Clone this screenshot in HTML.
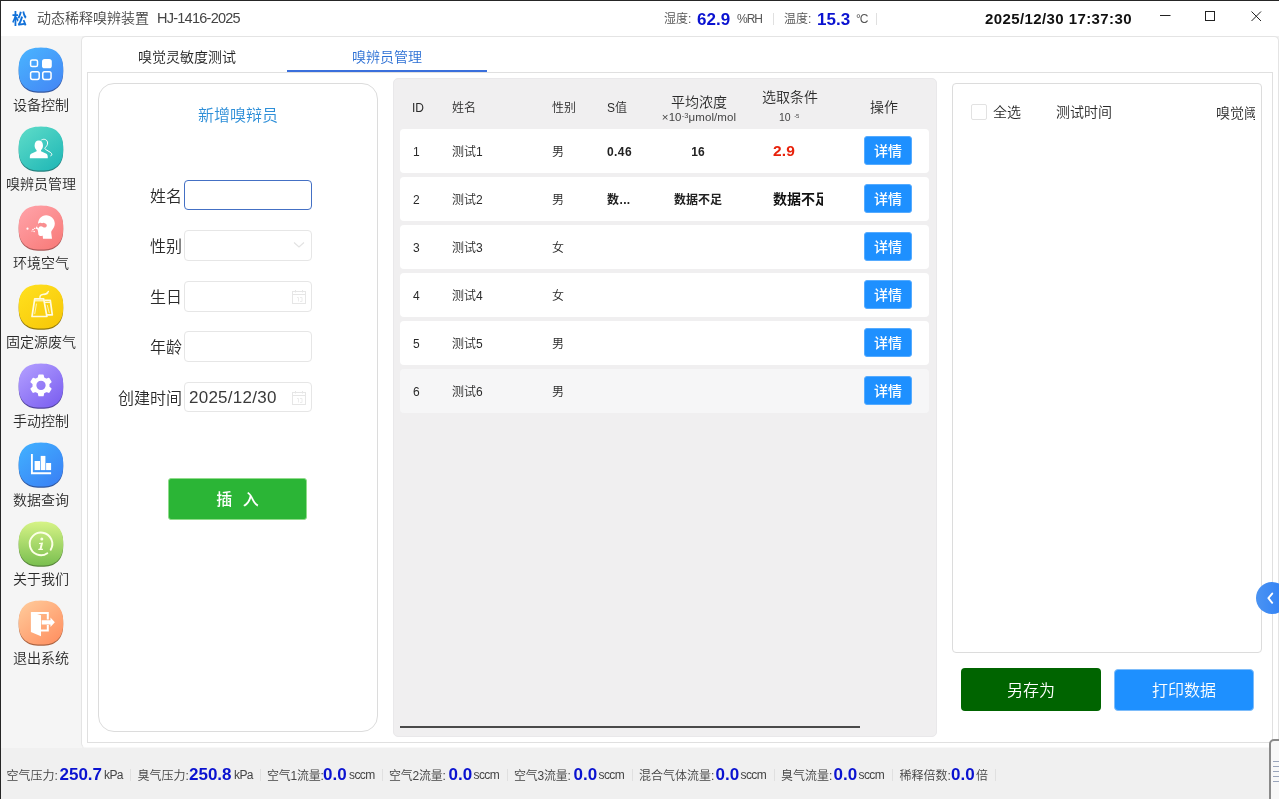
<!DOCTYPE html>
<html lang="zh-CN">
<head>
<meta charset="utf-8">
<title>动态稀释嗅辨装置 HJ-1416-2025</title>
<style>
*{box-sizing:border-box;margin:0;padding:0}
html,body{width:1279px;height:799px;overflow:hidden;background:#fff}
body{font-family:"Liberation Sans","Noto Sans CJK SC",sans-serif;color:#2a2a2a;font-size:14px;font-weight:350;position:relative}
#win{position:absolute;left:0;top:0;width:1279px;height:799px;background:#f0f0f0;overflow:hidden;will-change:transform}
#frameL{position:absolute;left:0;top:0;width:1px;height:799px;background:#262626;z-index:50}
#frameT{position:absolute;left:0;top:0;width:1279px;height:1px;background:#262626;z-index:50}
#titlebar{position:absolute;left:0;top:0;width:1279px;height:36px;background:#fff}
#sidebar{position:absolute;left:0;top:36px;width:82px;height:712px;background:#f5f5f5}
#content{position:absolute;left:81px;top:36px;width:1198px;height:712px;background:#fff;border:1px solid #e4e4e4;border-bottom-color:#f8f8f8;border-radius:5px 5px 0 5px}
#tabpanel{position:absolute;left:87px;top:72px;width:1186px;height:671px;border:1px solid #e0e0e0;background:#fff}
#statusbar{position:absolute;left:0;top:748px;width:1279px;height:51px;background:#f0f0f0}
.t{position:absolute;white-space:nowrap;line-height:20px;height:20px}
.c{text-align:center}
.b{font-weight:bold}
.nav{position:absolute;left:0;width:82px;height:79px}
.nav svg{position:absolute;left:18px;top:0;width:46px;height:46px}
.nav .t{left:0;width:82px;text-align:center;font-size:14px;color:#2a2a2a;top:48px}
.tab{font-size:14px;color:#222;top:47px;text-align:center;width:200px}
.tab.on{color:#2b6fd4}
#tabline{position:absolute;left:287px;top:70px;width:200px;height:2px;background:#3a6fdc}
#card{position:absolute;left:98px;top:83px;width:280px;height:649px;border:1px solid #dcdcdc;border-radius:16px;background:#fff}
.lbl{font-size:16px;color:#2a2a2a;width:100px;text-align:right;left:82px;line-height:30px;height:30px}
.inp{position:absolute;left:184px;width:128px;height:30px;border:1px solid #e6e6e6;border-radius:4px;background:#fff}
.inp.focus{border-color:#4470c4}
#btnIns{position:absolute;left:168px;top:478px;width:139px;height:42px;background:#2bb536;border:1px solid #8fdc8a;border-radius:3px;color:#fff;font-size:16px;text-align:center;line-height:41px;word-spacing:6px;font-weight:500}
#tbl{position:absolute;left:393px;top:78px;width:544px;height:659px;background:#f0eff0;border:1px solid #e9e8ea;border-radius:5px}
.row{position:absolute;left:400px;width:529px;height:44px;background:#fff;border-radius:4px}
.row.hov{background:#f6f6f7}
.cell{font-size:12px;color:#2a2a2a}
.det{position:absolute;left:864px;width:48px;height:29px;background:#1e90ff;border-radius:3px;color:#fff;font-size:14px;font-weight:500;text-align:center;line-height:28px;border:1px solid #55abff}
#hscroll{position:absolute;left:400px;top:726px;width:460px;height:2px;background:#4a4a4a}
#rpanel{position:absolute;left:952px;top:83px;width:310px;height:570px;border:1px solid #dcdcdc;border-radius:4px;background:#fff}
#chk{position:absolute;left:971px;top:104px;width:16px;height:16px;border:1px solid #e2e2e2;border-radius:2px;background:#fff}
#btnSave{position:absolute;left:961px;top:668px;width:140px;height:43px;background:#006400;border-radius:4px;color:#fff;font-size:16px;text-align:center;line-height:45px}
#btnPrint{position:absolute;left:1114px;top:669px;width:140px;height:42px;background:#1e90ff;border:1px solid #7dbcfa;border-radius:4px;color:#fff;font-size:16px;text-align:center;line-height:42px}
#fab{position:absolute;left:1256px;top:582px;width:32px;height:32px;border-radius:16px;background:linear-gradient(90deg,#4b93f2,#2d7ff6)}
#grip{position:absolute;left:1269px;top:739px;width:20px;height:70px;border:2px solid #8a8a8a;border-radius:5px;background:#f8f8f8}
.sl{font-size:12px;color:#444}
.sv{font-size:17px;font-weight:bold;color:#0a12d0}
.su{font-size:12px;letter-spacing:-0.6px;color:#444}
.sep{position:absolute;width:1px;height:12px;background:#e0e0e0}
</style>
</head>
<body>
<div id="win">

<div id="titlebar">
<span class="t b" style="left:12px;top:9px;font-size:15px;color:#1070d8">松</span>
<span class="t" style="left:37px;top:8px;font-size:14px;color:#444">动态稀释嗅辨装置<span style="font-size:14.5px;letter-spacing:-0.75px;margin-left:8px">HJ-1416-2025</span></span>
<span class="t sl" style="left:664px;top:9px;color:#555">湿度:</span>
<span class="t sv" style="left:697px;top:10px">62.9</span>
<span class="t su" style="left:737px;top:8.5px;color:#555;letter-spacing:-1px">%RH</span>
<span class="sep" style="left:773px;top:13px"></span>
<span class="t sl" style="left:784px;top:9px;color:#555">温度:</span>
<span class="t sv" style="left:817px;top:10px">15.3</span>
<span class="t su" style="left:856px;top:8.5px;color:#555;letter-spacing:-1px">°C</span>
<span class="sep" style="left:876px;top:13px"></span>
<span class="t b" style="left:985px;top:9px;font-size:15px;letter-spacing:0.4px;color:#111">2025/12/30 17:37:30</span>
<svg style="position:absolute;left:1150px;top:0" width="129" height="36" viewBox="0 0 129 36"><path d="M10 15.500h10.500" stroke="#222" stroke-width="1" fill="none"/><rect x="55.500" y="11.500" width="9" height="9" fill="none" stroke="#222" stroke-width="1"/><path d="M101.500 11.500l9.500 9.500M111 11.500l-9.500 9.500" stroke="#222" stroke-width="1" fill="none"/></svg>
</div>
<div id="sidebar"></div>
<div class="nav" style="top:47px"><svg viewBox="-0.7 -0.6 46 46"><defs><linearGradient id="g0" x1="0.1" y1="0" x2="0.9" y2="1"><stop offset="0" stop-color="#49b3ff"/><stop offset="1" stop-color="#4487f5"/></linearGradient></defs><path d="M44.50,22.00 L44.43,25.12 L44.23,27.42 L43.89,29.46 L43.42,31.33 L42.82,33.05 L42.08,34.64 L41.22,36.10 L40.23,37.45 L39.11,38.67 L37.87,39.78 L36.51,40.75 L35.03,41.61 L33.42,42.33 L31.68,42.93 L29.80,43.40 L27.73,43.73 L25.41,43.93 L22.25,44.00 L19.09,43.93 L16.77,43.73 L14.70,43.40 L12.82,42.93 L11.08,42.33 L9.47,41.61 L7.99,40.75 L6.63,39.78 L5.39,38.67 L4.27,37.45 L3.28,36.10 L2.42,34.64 L1.68,33.05 L1.08,31.33 L0.61,29.46 L0.27,27.42 L0.07,25.12 L0.00,22.00 L0.07,18.88 L0.27,16.58 L0.61,14.54 L1.08,12.67 L1.68,10.95 L2.42,9.36 L3.28,7.90 L4.27,6.55 L5.39,5.33 L6.63,4.22 L7.99,3.25 L9.47,2.39 L11.08,1.67 L12.82,1.07 L14.70,0.60 L16.77,0.27 L19.09,0.07 L22.25,0.00 L25.41,0.07 L27.73,0.27 L29.80,0.60 L31.68,1.07 L33.42,1.67 L35.03,2.39 L36.51,3.25 L37.87,4.22 L39.11,5.33 L40.23,6.55 L41.22,7.90 L42.08,9.36 L42.82,10.95 L43.42,12.67 L43.89,14.54 L44.23,16.58 L44.43,18.88Z" fill="#2a4f9a" transform="translate(0,1.2)" opacity="0.95"/><path d="M44.50,22.00 L44.43,25.12 L44.23,27.42 L43.89,29.46 L43.42,31.33 L42.82,33.05 L42.08,34.64 L41.22,36.10 L40.23,37.45 L39.11,38.67 L37.87,39.78 L36.51,40.75 L35.03,41.61 L33.42,42.33 L31.68,42.93 L29.80,43.40 L27.73,43.73 L25.41,43.93 L22.25,44.00 L19.09,43.93 L16.77,43.73 L14.70,43.40 L12.82,42.93 L11.08,42.33 L9.47,41.61 L7.99,40.75 L6.63,39.78 L5.39,38.67 L4.27,37.45 L3.28,36.10 L2.42,34.64 L1.68,33.05 L1.08,31.33 L0.61,29.46 L0.27,27.42 L0.07,25.12 L0.00,22.00 L0.07,18.88 L0.27,16.58 L0.61,14.54 L1.08,12.67 L1.68,10.95 L2.42,9.36 L3.28,7.90 L4.27,6.55 L5.39,5.33 L6.63,4.22 L7.99,3.25 L9.47,2.39 L11.08,1.67 L12.82,1.07 L14.70,0.60 L16.77,0.27 L19.09,0.07 L22.25,0.00 L25.41,0.07 L27.73,0.27 L29.80,0.60 L31.68,1.07 L33.42,1.67 L35.03,2.39 L36.51,3.25 L37.87,4.22 L39.11,5.33 L40.23,6.55 L41.22,7.90 L42.08,9.36 L42.82,10.95 L43.42,12.67 L43.89,14.54 L44.23,16.58 L44.43,18.88Z" fill="url(#g0)"/><rect x="11.9" y="12.4" width="6.9" height="6.6" rx="1.6" fill="none" stroke="#fff" stroke-width="1.5"/>
<rect x="23.3" y="11.3" width="9.8" height="9.4" rx="2.6" fill="#fff"/>
<rect x="11.9" y="24.2" width="8.6" height="7.6" rx="1.8" fill="none" stroke="#fff" stroke-width="1.5"/>
<rect x="24.05" y="24.2" width="8.3" height="7.6" rx="1.8" fill="none" stroke="#fff" stroke-width="1.5"/></svg><span class="t">设备控制</span></div>
<div class="nav" style="top:126px"><svg viewBox="-0.7 -0.6 46 46"><defs><linearGradient id="g1" x1="0.1" y1="0" x2="0.9" y2="1"><stop offset="0" stop-color="#5cdbc8"/><stop offset="1" stop-color="#20b7b6"/></linearGradient></defs><path d="M44.50,22.00 L44.43,25.12 L44.23,27.42 L43.89,29.46 L43.42,31.33 L42.82,33.05 L42.08,34.64 L41.22,36.10 L40.23,37.45 L39.11,38.67 L37.87,39.78 L36.51,40.75 L35.03,41.61 L33.42,42.33 L31.68,42.93 L29.80,43.40 L27.73,43.73 L25.41,43.93 L22.25,44.00 L19.09,43.93 L16.77,43.73 L14.70,43.40 L12.82,42.93 L11.08,42.33 L9.47,41.61 L7.99,40.75 L6.63,39.78 L5.39,38.67 L4.27,37.45 L3.28,36.10 L2.42,34.64 L1.68,33.05 L1.08,31.33 L0.61,29.46 L0.27,27.42 L0.07,25.12 L0.00,22.00 L0.07,18.88 L0.27,16.58 L0.61,14.54 L1.08,12.67 L1.68,10.95 L2.42,9.36 L3.28,7.90 L4.27,6.55 L5.39,5.33 L6.63,4.22 L7.99,3.25 L9.47,2.39 L11.08,1.67 L12.82,1.07 L14.70,0.60 L16.77,0.27 L19.09,0.07 L22.25,0.00 L25.41,0.07 L27.73,0.27 L29.80,0.60 L31.68,1.07 L33.42,1.67 L35.03,2.39 L36.51,3.25 L37.87,4.22 L39.11,5.33 L40.23,6.55 L41.22,7.90 L42.08,9.36 L42.82,10.95 L43.42,12.67 L43.89,14.54 L44.23,16.58 L44.43,18.88Z" fill="#1a7a78" transform="translate(0,1.2)" opacity="0.95"/><path d="M44.50,22.00 L44.43,25.12 L44.23,27.42 L43.89,29.46 L43.42,31.33 L42.82,33.05 L42.08,34.64 L41.22,36.10 L40.23,37.45 L39.11,38.67 L37.87,39.78 L36.51,40.75 L35.03,41.61 L33.42,42.33 L31.68,42.93 L29.80,43.40 L27.73,43.73 L25.41,43.93 L22.25,44.00 L19.09,43.93 L16.77,43.73 L14.70,43.40 L12.82,42.93 L11.08,42.33 L9.47,41.61 L7.99,40.75 L6.63,39.78 L5.39,38.67 L4.27,37.45 L3.28,36.10 L2.42,34.64 L1.68,33.05 L1.08,31.33 L0.61,29.46 L0.27,27.42 L0.07,25.12 L0.00,22.00 L0.07,18.88 L0.27,16.58 L0.61,14.54 L1.08,12.67 L1.68,10.95 L2.42,9.36 L3.28,7.90 L4.27,6.55 L5.39,5.33 L6.63,4.22 L7.99,3.25 L9.47,2.39 L11.08,1.67 L12.82,1.07 L14.70,0.60 L16.77,0.27 L19.09,0.07 L22.25,0.00 L25.41,0.07 L27.73,0.27 L29.80,0.60 L31.68,1.07 L33.42,1.67 L35.03,2.39 L36.51,3.25 L37.87,4.22 L39.11,5.33 L40.23,6.55 L41.22,7.90 L42.08,9.36 L42.82,10.95 L43.42,12.67 L43.89,14.54 L44.23,16.58 L44.43,18.88Z" fill="url(#g1)"/><path d="M20.25 14c2.45 0 4.05 1.9 4.05 5 0 1.9-0.85 3.7-2 4.600v1.100l4.900 2.300c1.400 0.650 1.850 1.800 1.850 3.200v1.350H11.150v-1.350c0-1.400 0.450-2.550 1.850-3.200l4.900-2.300v-1.100c-1.150-0.900-2-2.700-2-4.600 0-3.100 1.600-5 4.050-5z" fill="#fff"/>
<path d="M23 13.200c2.700-1.600 5.900 0.200 5.900 3.200 0 1.700-0.800 3-1.900 4.100-0.900 0.900-1.100 1.700-0.200 2.300l4.500 2.700c1.200 0.700 1.900 1.600 1.800 2.600-0.050 0.600-0.400 0.900-1 1.100" fill="none" stroke="#fff" stroke-width="1" stroke-linecap="round"/></svg><span class="t">嗅辨员管理</span></div>
<div class="nav" style="top:205px"><svg viewBox="-0.7 -0.6 46 46"><defs><linearGradient id="g2" x1="0.1" y1="0" x2="0.9" y2="1"><stop offset="0" stop-color="#ffa2a8"/><stop offset="1" stop-color="#f87a78"/></linearGradient></defs><path d="M44.50,22.00 L44.43,25.12 L44.23,27.42 L43.89,29.46 L43.42,31.33 L42.82,33.05 L42.08,34.64 L41.22,36.10 L40.23,37.45 L39.11,38.67 L37.87,39.78 L36.51,40.75 L35.03,41.61 L33.42,42.33 L31.68,42.93 L29.80,43.40 L27.73,43.73 L25.41,43.93 L22.25,44.00 L19.09,43.93 L16.77,43.73 L14.70,43.40 L12.82,42.93 L11.08,42.33 L9.47,41.61 L7.99,40.75 L6.63,39.78 L5.39,38.67 L4.27,37.45 L3.28,36.10 L2.42,34.64 L1.68,33.05 L1.08,31.33 L0.61,29.46 L0.27,27.42 L0.07,25.12 L0.00,22.00 L0.07,18.88 L0.27,16.58 L0.61,14.54 L1.08,12.67 L1.68,10.95 L2.42,9.36 L3.28,7.90 L4.27,6.55 L5.39,5.33 L6.63,4.22 L7.99,3.25 L9.47,2.39 L11.08,1.67 L12.82,1.07 L14.70,0.60 L16.77,0.27 L19.09,0.07 L22.25,0.00 L25.41,0.07 L27.73,0.27 L29.80,0.60 L31.68,1.07 L33.42,1.67 L35.03,2.39 L36.51,3.25 L37.87,4.22 L39.11,5.33 L40.23,6.55 L41.22,7.90 L42.08,9.36 L42.82,10.95 L43.42,12.67 L43.89,14.54 L44.23,16.58 L44.43,18.88Z" fill="#a85050" transform="translate(0,1.2)" opacity="0.95"/><path d="M44.50,22.00 L44.43,25.12 L44.23,27.42 L43.89,29.46 L43.42,31.33 L42.82,33.05 L42.08,34.64 L41.22,36.10 L40.23,37.45 L39.11,38.67 L37.87,39.78 L36.51,40.75 L35.03,41.61 L33.42,42.33 L31.68,42.93 L29.80,43.40 L27.73,43.73 L25.41,43.93 L22.25,44.00 L19.09,43.93 L16.77,43.73 L14.70,43.40 L12.82,42.93 L11.08,42.33 L9.47,41.61 L7.99,40.75 L6.63,39.78 L5.39,38.67 L4.27,37.45 L3.28,36.10 L2.42,34.64 L1.68,33.05 L1.08,31.33 L0.61,29.46 L0.27,27.42 L0.07,25.12 L0.00,22.00 L0.07,18.88 L0.27,16.58 L0.61,14.54 L1.08,12.67 L1.68,10.95 L2.42,9.36 L3.28,7.90 L4.27,6.55 L5.39,5.33 L6.63,4.22 L7.99,3.25 L9.47,2.39 L11.08,1.67 L12.82,1.07 L14.70,0.60 L16.77,0.27 L19.09,0.07 L22.25,0.00 L25.41,0.07 L27.73,0.27 L29.80,0.60 L31.68,1.07 L33.42,1.67 L35.03,2.39 L36.51,3.25 L37.87,4.22 L39.11,5.33 L40.23,6.55 L41.22,7.90 L42.08,9.36 L42.82,10.95 L43.42,12.67 L43.89,14.54 L44.23,16.58 L44.43,18.88Z" fill="url(#g2)"/><g transform="translate(-0.5,-0.2)">
<path d="M28 9.800c4.800 0 8.600 3.600 8.600 8.400 0 3-1.300 5-2.800 6.600-0.700 0.800-0.900 1.800-0.700 3l0.700 5.600H24.800l-0.300-3c-2 0.300-3.800-0.100-4.300-1.400-0.300-0.800 0.100-1.600-0.300-2.200-0.200-0.400-0.300-0.900 0-1.300-0.500-0.300-0.700-0.800-0.500-1.300l-1.500-0.900c-0.600-0.400-0.500-1 0-1.500l1.900-2.300c-0.300-5.400 3.200-9.700 8.200-9.700z" fill="#fff"/>
<path d="M18.800 21.600c0.400-3.200 2.200-4.600 4.200-4 1.200 0.400 1.800-0.300 3-0.100 1.700 0.300 2.800 1.600 2.600 2.900-0.200 1.300-1.500 2-2.900 1.700-1-0.200-1.600-1.100-2.800-1.200-1.200-0.100-2.300 0.600-2.700 2.100z" fill="#f98e90"/>
</g>
<circle cx="8.800" cy="23.100" r="1.100" fill="#fff"/>
<circle cx="14.300" cy="24" r="0.800" fill="#fff"/>
<circle cx="16" cy="22.800" r="0.700" fill="#fff"/>
<circle cx="15.400" cy="26" r="0.750" fill="#fff"/>
<circle cx="13.300" cy="25.500" r="0.550" fill="#fff"/></svg><span class="t">环境空气</span></div>
<div class="nav" style="top:284px"><svg viewBox="-0.7 -0.6 46 46"><defs><linearGradient id="g3" x1="0.1" y1="0" x2="0.9" y2="1"><stop offset="0" stop-color="#ffe01e"/><stop offset="1" stop-color="#f7c708"/></linearGradient></defs><path d="M44.50,22.00 L44.43,25.12 L44.23,27.42 L43.89,29.46 L43.42,31.33 L42.82,33.05 L42.08,34.64 L41.22,36.10 L40.23,37.45 L39.11,38.67 L37.87,39.78 L36.51,40.75 L35.03,41.61 L33.42,42.33 L31.68,42.93 L29.80,43.40 L27.73,43.73 L25.41,43.93 L22.25,44.00 L19.09,43.93 L16.77,43.73 L14.70,43.40 L12.82,42.93 L11.08,42.33 L9.47,41.61 L7.99,40.75 L6.63,39.78 L5.39,38.67 L4.27,37.45 L3.28,36.10 L2.42,34.64 L1.68,33.05 L1.08,31.33 L0.61,29.46 L0.27,27.42 L0.07,25.12 L0.00,22.00 L0.07,18.88 L0.27,16.58 L0.61,14.54 L1.08,12.67 L1.68,10.95 L2.42,9.36 L3.28,7.90 L4.27,6.55 L5.39,5.33 L6.63,4.22 L7.99,3.25 L9.47,2.39 L11.08,1.67 L12.82,1.07 L14.70,0.60 L16.77,0.27 L19.09,0.07 L22.25,0.00 L25.41,0.07 L27.73,0.27 L29.80,0.60 L31.68,1.07 L33.42,1.67 L35.03,2.39 L36.51,3.25 L37.87,4.22 L39.11,5.33 L40.23,6.55 L41.22,7.90 L42.08,9.36 L42.82,10.95 L43.42,12.67 L43.89,14.54 L44.23,16.58 L44.43,18.88Z" fill="#8a7000" transform="translate(0,1.2)" opacity="0.95"/><path d="M44.50,22.00 L44.43,25.12 L44.23,27.42 L43.89,29.46 L43.42,31.33 L42.82,33.05 L42.08,34.64 L41.22,36.10 L40.23,37.45 L39.11,38.67 L37.87,39.78 L36.51,40.75 L35.03,41.61 L33.42,42.33 L31.68,42.93 L29.80,43.40 L27.73,43.73 L25.41,43.93 L22.25,44.00 L19.09,43.93 L16.77,43.73 L14.70,43.40 L12.82,42.93 L11.08,42.33 L9.47,41.61 L7.99,40.75 L6.63,39.78 L5.39,38.67 L4.27,37.45 L3.28,36.10 L2.42,34.64 L1.68,33.05 L1.08,31.33 L0.61,29.46 L0.27,27.42 L0.07,25.12 L0.00,22.00 L0.07,18.88 L0.27,16.58 L0.61,14.54 L1.08,12.67 L1.68,10.95 L2.42,9.36 L3.28,7.90 L4.27,6.55 L5.39,5.33 L6.63,4.22 L7.99,3.25 L9.47,2.39 L11.08,1.67 L12.82,1.07 L14.70,0.60 L16.77,0.27 L19.09,0.07 L22.25,0.00 L25.41,0.07 L27.73,0.27 L29.80,0.60 L31.68,1.07 L33.42,1.67 L35.03,2.39 L36.51,3.25 L37.87,4.22 L39.11,5.33 L40.23,6.55 L41.22,7.90 L42.08,9.36 L42.82,10.95 L43.42,12.67 L43.89,14.54 L44.23,16.58 L44.43,18.88Z" fill="url(#g3)"/><path d="M16 14.300h9l3.200 17.600H13.300z" fill="none" stroke="#fffbe0" stroke-width="1.700" stroke-linejoin="round"/>
<path d="M15.800 16.200h9.400" stroke="#fffbe0" stroke-width="1.100"/>
<path d="M25.800 15.800h5.800l2 14.400h-5.600" fill="none" stroke="#fffbe0" stroke-width="1.700" stroke-linejoin="round"/>
<path d="M26.200 17.800h5.600" stroke="#fffbe0" stroke-width="1.100"/>
<path d="M17.800 19l-1.800 10.500M28.600 20.500l2 8" stroke="#fffbe0" stroke-width="0.900" opacity="0.850"/>
<path d="M21.300 13.600c-0.400-2.400 0.800-3.500 2.800-3.700 2.400-0.200 4.600-1 5.600-3" fill="none" stroke="#fffbe0" stroke-width="1.400" stroke-linecap="round"/>
<path d="M25.600 10.100c1-0.300 2.300-0.500 3.600-1.100" fill="none" stroke="#fffbe0" stroke-width="1" stroke-linecap="round"/></svg><span class="t">固定源废气</span></div>
<div class="nav" style="top:363px"><svg viewBox="-0.7 -0.6 46 46"><defs><linearGradient id="g4" x1="0.1" y1="0" x2="0.9" y2="1"><stop offset="0" stop-color="#b29eff"/><stop offset="1" stop-color="#7a5ef0"/></linearGradient></defs><path d="M44.50,22.00 L44.43,25.12 L44.23,27.42 L43.89,29.46 L43.42,31.33 L42.82,33.05 L42.08,34.64 L41.22,36.10 L40.23,37.45 L39.11,38.67 L37.87,39.78 L36.51,40.75 L35.03,41.61 L33.42,42.33 L31.68,42.93 L29.80,43.40 L27.73,43.73 L25.41,43.93 L22.25,44.00 L19.09,43.93 L16.77,43.73 L14.70,43.40 L12.82,42.93 L11.08,42.33 L9.47,41.61 L7.99,40.75 L6.63,39.78 L5.39,38.67 L4.27,37.45 L3.28,36.10 L2.42,34.64 L1.68,33.05 L1.08,31.33 L0.61,29.46 L0.27,27.42 L0.07,25.12 L0.00,22.00 L0.07,18.88 L0.27,16.58 L0.61,14.54 L1.08,12.67 L1.68,10.95 L2.42,9.36 L3.28,7.90 L4.27,6.55 L5.39,5.33 L6.63,4.22 L7.99,3.25 L9.47,2.39 L11.08,1.67 L12.82,1.07 L14.70,0.60 L16.77,0.27 L19.09,0.07 L22.25,0.00 L25.41,0.07 L27.73,0.27 L29.80,0.60 L31.68,1.07 L33.42,1.67 L35.03,2.39 L36.51,3.25 L37.87,4.22 L39.11,5.33 L40.23,6.55 L41.22,7.90 L42.08,9.36 L42.82,10.95 L43.42,12.67 L43.89,14.54 L44.23,16.58 L44.43,18.88Z" fill="#4a3c98" transform="translate(0,1.2)" opacity="0.95"/><path d="M44.50,22.00 L44.43,25.12 L44.23,27.42 L43.89,29.46 L43.42,31.33 L42.82,33.05 L42.08,34.64 L41.22,36.10 L40.23,37.45 L39.11,38.67 L37.87,39.78 L36.51,40.75 L35.03,41.61 L33.42,42.33 L31.68,42.93 L29.80,43.40 L27.73,43.73 L25.41,43.93 L22.25,44.00 L19.09,43.93 L16.77,43.73 L14.70,43.40 L12.82,42.93 L11.08,42.33 L9.47,41.61 L7.99,40.75 L6.63,39.78 L5.39,38.67 L4.27,37.45 L3.28,36.10 L2.42,34.64 L1.68,33.05 L1.08,31.33 L0.61,29.46 L0.27,27.42 L0.07,25.12 L0.00,22.00 L0.07,18.88 L0.27,16.58 L0.61,14.54 L1.08,12.67 L1.68,10.95 L2.42,9.36 L3.28,7.90 L4.27,6.55 L5.39,5.33 L6.63,4.22 L7.99,3.25 L9.47,2.39 L11.08,1.67 L12.82,1.07 L14.70,0.60 L16.77,0.27 L19.09,0.07 L22.25,0.00 L25.41,0.07 L27.73,0.27 L29.80,0.60 L31.68,1.07 L33.42,1.67 L35.03,2.39 L36.51,3.25 L37.87,4.22 L39.11,5.33 L40.23,6.55 L41.22,7.90 L42.08,9.36 L42.82,10.95 L43.42,12.67 L43.89,14.54 L44.23,16.58 L44.43,18.88Z" fill="url(#g4)"/><path d="M19.81,14.25 L20.34,11.54 L24.26,11.54 L24.79,14.25 L27.55,15.85 L30.16,14.94 L32.13,18.34 L30.04,20.15 L30.04,23.35 L32.13,25.16 L30.16,28.56 L27.55,27.65 L24.79,29.25 L24.26,31.96 L20.34,31.96 L19.81,29.25 L17.05,27.65 L14.44,28.56 L12.47,25.16 L14.56,23.35 L14.56,20.15 L12.47,18.34 L14.44,14.94 L17.05,15.85Z M27.70,21.75 a5.4,5.4 0 1,0 -10.8,0 a5.4,5.4 0 1,0 10.8,0Z" fill="#fff" fill-rule="evenodd" stroke="#fff" stroke-width="1.500" stroke-linejoin="round"/></svg><span class="t">手动控制</span></div>
<div class="nav" style="top:442px"><svg viewBox="-0.7 -0.6 46 46"><defs><linearGradient id="g5" x1="0.1" y1="0" x2="0.9" y2="1"><stop offset="0" stop-color="#41b0ff"/><stop offset="1" stop-color="#3a80f5"/></linearGradient></defs><path d="M44.50,22.00 L44.43,25.12 L44.23,27.42 L43.89,29.46 L43.42,31.33 L42.82,33.05 L42.08,34.64 L41.22,36.10 L40.23,37.45 L39.11,38.67 L37.87,39.78 L36.51,40.75 L35.03,41.61 L33.42,42.33 L31.68,42.93 L29.80,43.40 L27.73,43.73 L25.41,43.93 L22.25,44.00 L19.09,43.93 L16.77,43.73 L14.70,43.40 L12.82,42.93 L11.08,42.33 L9.47,41.61 L7.99,40.75 L6.63,39.78 L5.39,38.67 L4.27,37.45 L3.28,36.10 L2.42,34.64 L1.68,33.05 L1.08,31.33 L0.61,29.46 L0.27,27.42 L0.07,25.12 L0.00,22.00 L0.07,18.88 L0.27,16.58 L0.61,14.54 L1.08,12.67 L1.68,10.95 L2.42,9.36 L3.28,7.90 L4.27,6.55 L5.39,5.33 L6.63,4.22 L7.99,3.25 L9.47,2.39 L11.08,1.67 L12.82,1.07 L14.70,0.60 L16.77,0.27 L19.09,0.07 L22.25,0.00 L25.41,0.07 L27.73,0.27 L29.80,0.60 L31.68,1.07 L33.42,1.67 L35.03,2.39 L36.51,3.25 L37.87,4.22 L39.11,5.33 L40.23,6.55 L41.22,7.90 L42.08,9.36 L42.82,10.95 L43.42,12.67 L43.89,14.54 L44.23,16.58 L44.43,18.88Z" fill="#254e9a" transform="translate(0,1.2)" opacity="0.95"/><path d="M44.50,22.00 L44.43,25.12 L44.23,27.42 L43.89,29.46 L43.42,31.33 L42.82,33.05 L42.08,34.64 L41.22,36.10 L40.23,37.45 L39.11,38.67 L37.87,39.78 L36.51,40.75 L35.03,41.61 L33.42,42.33 L31.68,42.93 L29.80,43.40 L27.73,43.73 L25.41,43.93 L22.25,44.00 L19.09,43.93 L16.77,43.73 L14.70,43.40 L12.82,42.93 L11.08,42.33 L9.47,41.61 L7.99,40.75 L6.63,39.78 L5.39,38.67 L4.27,37.45 L3.28,36.10 L2.42,34.64 L1.68,33.05 L1.08,31.33 L0.61,29.46 L0.27,27.42 L0.07,25.12 L0.00,22.00 L0.07,18.88 L0.27,16.58 L0.61,14.54 L1.08,12.67 L1.68,10.95 L2.42,9.36 L3.28,7.90 L4.27,6.55 L5.39,5.33 L6.63,4.22 L7.99,3.25 L9.47,2.39 L11.08,1.67 L12.82,1.07 L14.70,0.60 L16.77,0.27 L19.09,0.07 L22.25,0.00 L25.41,0.07 L27.73,0.27 L29.80,0.60 L31.68,1.07 L33.42,1.67 L35.03,2.39 L36.51,3.25 L37.87,4.22 L39.11,5.33 L40.23,6.55 L41.22,7.90 L42.08,9.36 L42.82,10.95 L43.42,12.67 L43.89,14.54 L44.23,16.58 L44.43,18.88Z" fill="url(#g5)"/><path d="M13.200 11.300v19.400h19.200" fill="none" stroke="#fff" stroke-width="1.900"/>
<rect x="15.900" y="18.400" width="5.400" height="9.100" fill="#fff"/>
<rect x="22" y="13.300" width="4.700" height="14.200" fill="#fff"/>
<rect x="27.400" y="20.400" width="5" height="7.100" fill="#fff"/></svg><span class="t">数据查询</span></div>
<div class="nav" style="top:521px"><svg viewBox="-0.7 -0.6 46 46"><defs><linearGradient id="g6" x1="0.5" y1="0" x2="0.5" y2="1"><stop offset="0" stop-color="#d6f386"/><stop offset="1" stop-color="#7abf50"/></linearGradient></defs><path d="M44.50,22.00 L44.43,25.12 L44.23,27.42 L43.89,29.46 L43.42,31.33 L42.82,33.05 L42.08,34.64 L41.22,36.10 L40.23,37.45 L39.11,38.67 L37.87,39.78 L36.51,40.75 L35.03,41.61 L33.42,42.33 L31.68,42.93 L29.80,43.40 L27.73,43.73 L25.41,43.93 L22.25,44.00 L19.09,43.93 L16.77,43.73 L14.70,43.40 L12.82,42.93 L11.08,42.33 L9.47,41.61 L7.99,40.75 L6.63,39.78 L5.39,38.67 L4.27,37.45 L3.28,36.10 L2.42,34.64 L1.68,33.05 L1.08,31.33 L0.61,29.46 L0.27,27.42 L0.07,25.12 L0.00,22.00 L0.07,18.88 L0.27,16.58 L0.61,14.54 L1.08,12.67 L1.68,10.95 L2.42,9.36 L3.28,7.90 L4.27,6.55 L5.39,5.33 L6.63,4.22 L7.99,3.25 L9.47,2.39 L11.08,1.67 L12.82,1.07 L14.70,0.60 L16.77,0.27 L19.09,0.07 L22.25,0.00 L25.41,0.07 L27.73,0.27 L29.80,0.60 L31.68,1.07 L33.42,1.67 L35.03,2.39 L36.51,3.25 L37.87,4.22 L39.11,5.33 L40.23,6.55 L41.22,7.90 L42.08,9.36 L42.82,10.95 L43.42,12.67 L43.89,14.54 L44.23,16.58 L44.43,18.88Z" fill="#4f8030" transform="translate(0,1.2)" opacity="0.95"/><path d="M44.50,22.00 L44.43,25.12 L44.23,27.42 L43.89,29.46 L43.42,31.33 L42.82,33.05 L42.08,34.64 L41.22,36.10 L40.23,37.45 L39.11,38.67 L37.87,39.78 L36.51,40.75 L35.03,41.61 L33.42,42.33 L31.68,42.93 L29.80,43.40 L27.73,43.73 L25.41,43.93 L22.25,44.00 L19.09,43.93 L16.77,43.73 L14.70,43.40 L12.82,42.93 L11.08,42.33 L9.47,41.61 L7.99,40.75 L6.63,39.78 L5.39,38.67 L4.27,37.45 L3.28,36.10 L2.42,34.64 L1.68,33.05 L1.08,31.33 L0.61,29.46 L0.27,27.42 L0.07,25.12 L0.00,22.00 L0.07,18.88 L0.27,16.58 L0.61,14.54 L1.08,12.67 L1.68,10.95 L2.42,9.36 L3.28,7.90 L4.27,6.55 L5.39,5.33 L6.63,4.22 L7.99,3.25 L9.47,2.39 L11.08,1.67 L12.82,1.07 L14.70,0.60 L16.77,0.27 L19.09,0.07 L22.25,0.00 L25.41,0.07 L27.73,0.27 L29.80,0.60 L31.68,1.07 L33.42,1.67 L35.03,2.39 L36.51,3.25 L37.87,4.22 L39.11,5.33 L40.23,6.55 L41.22,7.90 L42.08,9.36 L42.82,10.95 L43.42,12.67 L43.89,14.54 L44.23,16.58 L44.43,18.88Z" fill="url(#g6)"/><path d="M28.620 31.620A11.300 11.300 0 1 1 31.990 28.070" fill="none" stroke="#fcffe6" stroke-width="1.900" stroke-linecap="round"/>
<circle cx="23.100" cy="17.300" r="1.500" fill="#fcffe6"/>
<path d="M20.400 21.300l4-0.500-1.500 6.300h1.500l-0.300 1.300h-4.600l0.300-1.300h1.100l1.100-4.600h-1.800z" fill="#fcffe6"/></svg><span class="t">关于我们</span></div>
<div class="nav" style="top:600px"><svg viewBox="-0.7 -0.6 46 46"><defs><linearGradient id="g7" x1="0.1" y1="0" x2="0.9" y2="1"><stop offset="0" stop-color="#ffca9a"/><stop offset="1" stop-color="#ff8f60"/></linearGradient></defs><path d="M44.50,22.00 L44.43,25.12 L44.23,27.42 L43.89,29.46 L43.42,31.33 L42.82,33.05 L42.08,34.64 L41.22,36.10 L40.23,37.45 L39.11,38.67 L37.87,39.78 L36.51,40.75 L35.03,41.61 L33.42,42.33 L31.68,42.93 L29.80,43.40 L27.73,43.73 L25.41,43.93 L22.25,44.00 L19.09,43.93 L16.77,43.73 L14.70,43.40 L12.82,42.93 L11.08,42.33 L9.47,41.61 L7.99,40.75 L6.63,39.78 L5.39,38.67 L4.27,37.45 L3.28,36.10 L2.42,34.64 L1.68,33.05 L1.08,31.33 L0.61,29.46 L0.27,27.42 L0.07,25.12 L0.00,22.00 L0.07,18.88 L0.27,16.58 L0.61,14.54 L1.08,12.67 L1.68,10.95 L2.42,9.36 L3.28,7.90 L4.27,6.55 L5.39,5.33 L6.63,4.22 L7.99,3.25 L9.47,2.39 L11.08,1.67 L12.82,1.07 L14.70,0.60 L16.77,0.27 L19.09,0.07 L22.25,0.00 L25.41,0.07 L27.73,0.27 L29.80,0.60 L31.68,1.07 L33.42,1.67 L35.03,2.39 L36.51,3.25 L37.87,4.22 L39.11,5.33 L40.23,6.55 L41.22,7.90 L42.08,9.36 L42.82,10.95 L43.42,12.67 L43.89,14.54 L44.23,16.58 L44.43,18.88Z" fill="#a85c38" transform="translate(0,1.2)" opacity="0.95"/><path d="M44.50,22.00 L44.43,25.12 L44.23,27.42 L43.89,29.46 L43.42,31.33 L42.82,33.05 L42.08,34.64 L41.22,36.10 L40.23,37.45 L39.11,38.67 L37.87,39.78 L36.51,40.75 L35.03,41.61 L33.42,42.33 L31.68,42.93 L29.80,43.40 L27.73,43.73 L25.41,43.93 L22.25,44.00 L19.09,43.93 L16.77,43.73 L14.70,43.40 L12.82,42.93 L11.08,42.33 L9.47,41.61 L7.99,40.75 L6.63,39.78 L5.39,38.67 L4.27,37.45 L3.28,36.10 L2.42,34.64 L1.68,33.05 L1.08,31.33 L0.61,29.46 L0.27,27.42 L0.07,25.12 L0.00,22.00 L0.07,18.88 L0.27,16.58 L0.61,14.54 L1.08,12.67 L1.68,10.95 L2.42,9.36 L3.28,7.90 L4.27,6.55 L5.39,5.33 L6.63,4.22 L7.99,3.25 L9.47,2.39 L11.08,1.67 L12.82,1.07 L14.70,0.60 L16.77,0.27 L19.09,0.07 L22.25,0.00 L25.41,0.07 L27.73,0.27 L29.80,0.60 L31.68,1.07 L33.42,1.67 L35.03,2.39 L36.51,3.25 L37.87,4.22 L39.11,5.33 L40.23,6.55 L41.22,7.90 L42.08,9.36 L42.82,10.95 L43.42,12.67 L43.89,14.54 L44.23,16.58 L44.43,18.88Z" fill="url(#g7)"/><path d="M12.200 11.300l10.100 3.300v21l-10.100-4.300z" fill="#fff"/>
<path d="M12.600 12.300h16.500v6.700M29.100 24.500v5.400h-7.200" fill="none" stroke="#fff" stroke-width="2"/>
<path d="M23 19.700h8.750v-2.700l4.400 4.750-4.400 4.750v-2.700H23z" fill="#fff"/></svg><span class="t">退出系统</span></div>
<div id="content"></div>
<div id="tabpanel"></div>
<span class="t tab" style="left:87px">嗅觉灵敏度测试</span>
<span class="t tab on" style="left:287px">嗅辨员管理</span>
<div id="tabline"></div>
<div id="card"></div>
<span class="t c" style="left:98px;width:280px;top:106px;font-size:16px;color:#2e8fd8">新增嗅辩员</span>
<span class="t lbl" style="top:181.5px">姓名</span><div class="inp focus" style="top:180px;height:30px"></div>
<span class="t lbl" style="top:231.5px">性别</span><div class="inp " style="top:230px;height:31px"></div>
<span class="t lbl" style="top:282.5px">生日</span><div class="inp " style="top:281px;height:31px"></div>
<span class="t lbl" style="top:332.5px">年龄</span><div class="inp " style="top:331px;height:31px"></div>
<span class="t lbl" style="top:383.5px">创建时间</span><div class="inp " style="top:382px;height:30px"></div>
<svg style="position:absolute;left:292px;top:240px" width="14" height="10" viewBox="0 0 14 10"><path d="M2 2.500l5 4.500 5-4.500" fill="none" stroke="#e3e3e3" stroke-width="1.200"/></svg>
<svg style="position:absolute;left:291px;top:289px" width="16" height="16" viewBox="0 0 16 16"><rect x="1.500" y="2.500" width="13" height="12" fill="none" stroke="#e6e6e6" stroke-width="1"/><path d="M1.500 5.500h13M4.500 1v2.500M11.500 1v2.500" stroke="#e6e6e6" stroke-width="1" fill="none"/><path d="M6 8.500h1.500v4M9 8.500h2v4h-2" stroke="#ececec" stroke-width="1" fill="none"/></svg>
<svg style="position:absolute;left:291px;top:390px" width="16" height="16" viewBox="0 0 16 16"><rect x="1.500" y="2.500" width="13" height="12" fill="none" stroke="#e6e6e6" stroke-width="1"/><path d="M1.500 5.500h13M4.500 1v2.500M11.500 1v2.500" stroke="#e6e6e6" stroke-width="1" fill="none"/><path d="M6 8.500h1.500v4M9 8.500h2v4h-2" stroke="#ececec" stroke-width="1" fill="none"/></svg>
<span class="t" style="left:189px;top:383px;line-height:30px;height:30px;font-size:17px;letter-spacing:0.25px;color:#3a3a3a">2025/12/30</span>
<div id="btnIns">插 入</div>
<div id="tbl"></div>
<span class="t cell" style="left:412px;top:98px">ID</span>
<span class="t cell" style="left:452px;top:98px">姓名</span>
<span class="t cell" style="left:552px;top:98px">性别</span>
<span class="t cell" style="left:607px;top:98px">S值</span>
<span class="t c" style="left:649px;width:100px;top:91.5px;font-size:14px">平均浓度</span>
<span class="t c" style="left:649px;width:100px;top:106.5px;font-size:11.5px;letter-spacing:0.1px;color:#444">×10<sup style="font-size:7.5px;line-height:0;vertical-align:3px">-3</sup>μmol/mol</span>
<span class="t c" style="left:740px;width:100px;top:87px;font-size:14px">选取条件</span>
<span class="t" style="left:779px;top:106.5px;font-size:10.5px;color:#444;letter-spacing:-0.2px">10<sup style="font-size:6px;line-height:0;vertical-align:3px;margin-left:4px">-5</sup></span>
<span class="t c" style="left:834px;width:100px;top:97px;font-size:14px">操作</span>
<div class="row" style="top:129px"></div>
<span class="t cell" style="left:413px;top:142px">1</span><span class="t cell" style="left:452px;top:142px">测试1</span><span class="t cell" style="left:552px;top:142px">男</span>
<span class="t cell b" style="left:607px;top:142px;color:#222;letter-spacing:0.4px">0.46</span>
<span class="t cell b c" style="left:648px;width:100px;top:142px;color:#222">16</span>
<span class="t b" style="left:773px;top:141px;font-size:15.5px;letter-spacing:0.2px;color:#e8210a">2.9</span>
<div class="det" style="top:136px">详情</div>
<div class="row" style="top:177px"></div>
<span class="t cell" style="left:413px;top:190px">2</span><span class="t cell" style="left:452px;top:190px">测试2</span><span class="t cell" style="left:552px;top:190px">男</span>
<span class="t cell b" style="left:607px;top:190px;color:#222;letter-spacing:0.4px">数...</span>
<span class="t cell b c" style="left:648px;width:100px;top:190px;color:#222">数据不足</span>
<span class="t b" style="left:773px;top:189px;font-size:14px;color:#111;width:50px;overflow:hidden">数据不足</span>
<div class="det" style="top:184px">详情</div>
<div class="row" style="top:225px"></div>
<span class="t cell" style="left:413px;top:238px">3</span><span class="t cell" style="left:452px;top:238px">测试3</span><span class="t cell" style="left:552px;top:238px">女</span>
<div class="det" style="top:232px">详情</div>
<div class="row" style="top:273px"></div>
<span class="t cell" style="left:413px;top:286px">4</span><span class="t cell" style="left:452px;top:286px">测试4</span><span class="t cell" style="left:552px;top:286px">女</span>
<div class="det" style="top:280px">详情</div>
<div class="row" style="top:321px"></div>
<span class="t cell" style="left:413px;top:334px">5</span><span class="t cell" style="left:452px;top:334px">测试5</span><span class="t cell" style="left:552px;top:334px">男</span>
<div class="det" style="top:328px">详情</div>
<div class="row hov" style="top:369px"></div>
<span class="t cell" style="left:413px;top:382px">6</span><span class="t cell" style="left:452px;top:382px">测试6</span><span class="t cell" style="left:552px;top:382px">男</span>
<div class="det" style="top:376px">详情</div>
<div id="hscroll"></div>
<div id="rpanel"></div>
<div id="chk"></div>
<span class="t" style="left:993px;top:102px;font-size:14px">全选</span>
<span class="t" style="left:1056px;top:102px;font-size:14px">测试时间</span>
<span class="t" style="left:1216px;top:102.5px;font-size:14px;width:39px;overflow:hidden">嗅觉阈值</span>
<div id="btnSave">另存为</div>
<div id="btnPrint">打印数据</div>
<div id="fab"><svg style="position:absolute;left:9px;top:9px" width="10" height="14" viewBox="0 0 10 14"><path d="M7.200 2.600L3.400 7.200l3.800 4.600" fill="none" stroke="#fff" stroke-width="1.900" stroke-linecap="round" stroke-linejoin="round"/></svg></div>
<div id="statusbar"></div>
<span class="t sl" style="left:6.5px;top:765.5px">空气压力:</span><span class="t sv" style="left:59.5px;top:765px">250.7</span><span class="t su" style="left:104px;top:765px">kPa</span><span class="sep" style="left:129.5px;top:769px"></span>
<span class="t sl" style="left:137.5px;top:765.5px">臭气压力:</span><span class="t sv" style="left:189px;top:765px">250.8</span><span class="t su" style="left:234px;top:765px">kPa</span><span class="sep" style="left:259.5px;top:769px"></span>
<span class="t sl" style="left:267px;top:765.5px;letter-spacing:-0.25px">空气1流量:</span><span class="t sv" style="left:323px;top:765px">0.0</span><span class="t su" style="left:349px;top:765px">sccm</span><span class="sep" style="left:381.5px;top:769px"></span>
<span class="t sl" style="left:389px;top:765.5px;letter-spacing:-0.25px">空气2流量:</span><span class="t sv" style="left:448.5px;top:765px">0.0</span><span class="t su" style="left:473.5px;top:765px">sccm</span><span class="sep" style="left:506.5px;top:769px"></span>
<span class="t sl" style="left:514px;top:765.5px;letter-spacing:-0.25px">空气3流量:</span><span class="t sv" style="left:573.5px;top:765px">0.0</span><span class="t su" style="left:598.5px;top:765px">sccm</span><span class="sep" style="left:631.5px;top:769px"></span>
<span class="t sl" style="left:639px;top:765.5px">混合气体流量:</span><span class="t sv" style="left:715.5px;top:765px">0.0</span><span class="t su" style="left:740.5px;top:765px">sccm</span><span class="sep" style="left:773.5px;top:769px"></span>
<span class="t sl" style="left:781px;top:765.5px">臭气流量:</span><span class="t sv" style="left:833.5px;top:765px">0.0</span><span class="t su" style="left:858.5px;top:765px">sccm</span><span class="sep" style="left:891.5px;top:769px"></span>
<span class="t sl" style="left:899.5px;top:765.5px">稀释倍数:</span><span class="t sv" style="left:951px;top:765px">0.0</span><span class="t sl" style="left:976px;top:766px">倍</span><span class="sep" style="left:994.5px;top:769px"></span>
<div id="grip"><svg style="position:absolute;left:0;top:0" width="18" height="60" viewBox="0 0 18 60"><path d="M2 20.500h16M2 25.500h16M2 30.500h16M2 35.500h16M2 40.500h16" stroke="#9aa5bb" stroke-width="1" fill="none"/></svg></div>
<div id="frameL"></div><div id="frameT"></div>
</div>
</body>
</html>
